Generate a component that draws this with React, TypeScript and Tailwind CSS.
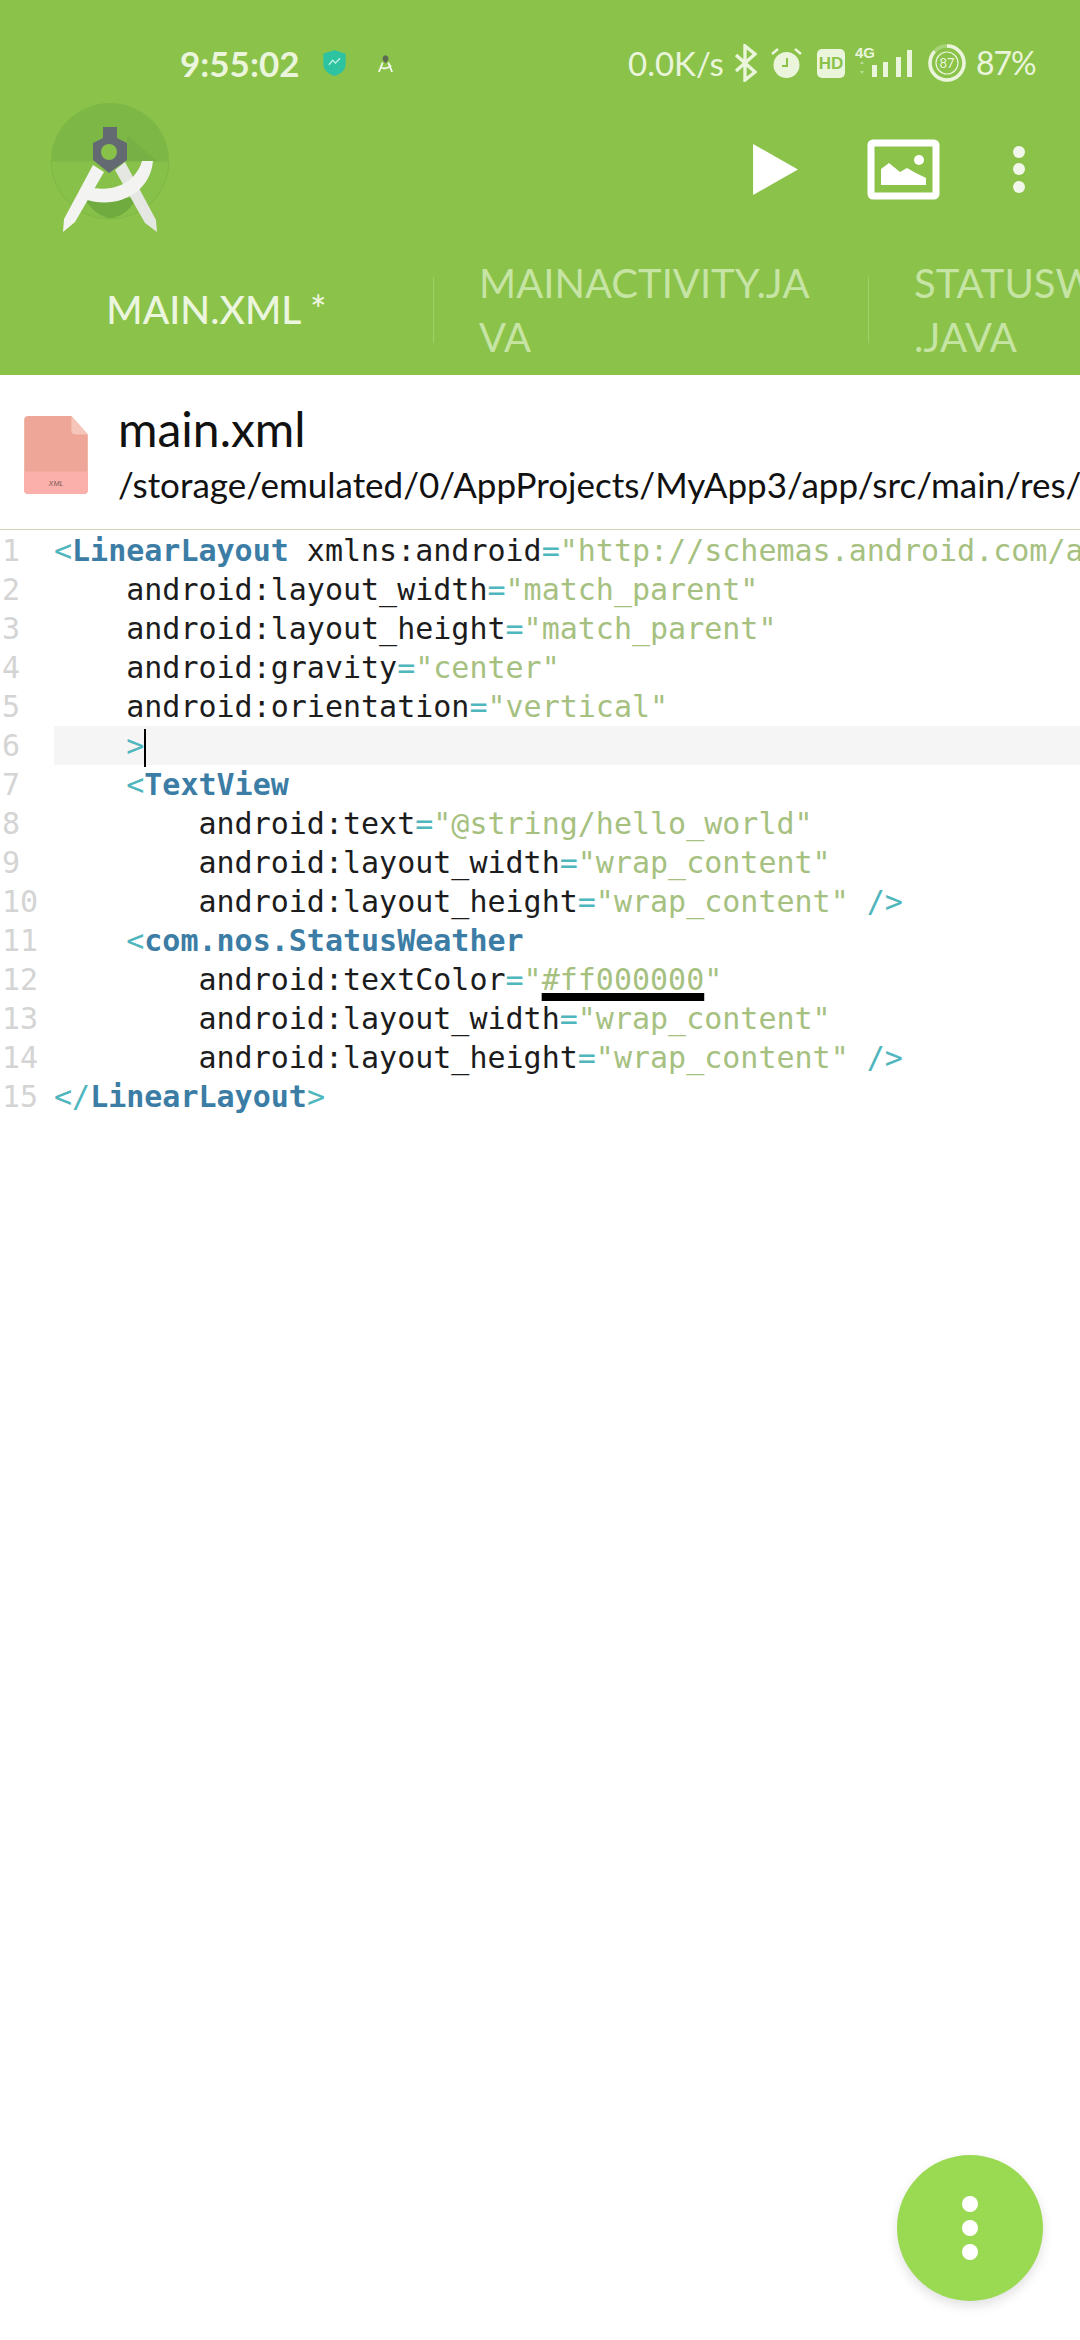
import React from "react";

const P = ({ children }: { children: React.ReactNode }) => <span className="text-[#4fb6bd]">{children}</span>;
const T = ({ children }: { children: React.ReactNode }) => <span className="font-bold text-[#3c7da6]">{children}</span>;
const S = ({ children }: { children: React.ReactNode }) => <span className="text-[#a6c17f]">{children}</span>;

const Attr = ({ indent, name, value, end }: { indent: string; name: string; value: React.ReactNode; end?: string }) => (
  <>
    {indent}
    {name}
    <P>=</P>
    <S>{value}</S>
    {end ? <P>{end}</P> : null}
  </>
);

const I4 = "    ";
const I8 = "        ";

const lines: React.ReactNode[] = [
  <>
    <P>&lt;</P>
    <T>LinearLayout</T> xmlns:android<P>=</P>
    <S>"http://schemas.android.com/a</S>
  </>,
  <Attr indent={I4} name="android:layout_width" value={'"match_parent"'} />,
  <Attr indent={I4} name="android:layout_height" value={'"match_parent"'} />,
  <Attr indent={I4} name="android:gravity" value={'"center"'} />,
  <Attr indent={I4} name="android:orientation" value={'"vertical"'} />,
  <>
    {I4}
    <P>&gt;</P>
    <span className="inline-block w-0 h-[38px] border-l-2 border-black align-middle" />
  </>,
  <>
    {I4}
    <P>&lt;</P>
    <T>TextView</T>
  </>,
  <Attr indent={I8} name="android:text" value={'"@string/hello_world"'} />,
  <Attr indent={I8} name="android:layout_width" value={'"wrap_content"'} />,
  <Attr indent={I8} name="android:layout_height" value={'"wrap_content"'} end=" />" />,
  <>
    {I4}
    <P>&lt;</P>
    <T>com.nos.StatusWeather</T>
  </>,
  <Attr
    indent={I8}
    name="android:textColor"
    value={
      <>
        "<span className="underline decoration-black decoration-[8px] underline-offset-[3px]">#ff000000</span>"
      </>
    }
  />,
  <Attr indent={I8} name="android:layout_width" value={'"wrap_content"'} />,
  <Attr indent={I8} name="android:layout_height" value={'"wrap_content"'} end=" />" />,
  <>
    <P>&lt;/</P>
    <T>LinearLayout</T>
    <P>&gt;</P>
  </>,
];

const Logo = () => (
  <svg className="ml-[45px] shrink-0" width="130" height="150" viewBox="45 93 130 150" fill="none">
    <path d="M51 161a59 58 0 0 1 118 0z" fill="#7db847" />
    <path d="M51 161a59 58 0 0 0 118 0z" fill="#88c14a" stroke="#7db847" strokeWidth="1" />
    <path d="M84 198c8 14 20 20 26 20s20-5 26-20z" fill="#6fab3f" />
    <path d="M127 135l30 26h-30z" fill="#77b044" />
    <path d="M93 165l11 7-29 50-12 10 1-13z" fill="#f3f4f1" />
    <path d="M115 170l10-8 31 58 1 12-12-9z" fill="#e5e8e2" />
    <path d="M88 187c20 5 46 0 54-26h11c-3 34-40 50-71 37z" fill="#f3f4f1" />
    <path d="M103 127h14v11l10 5v17l-18 13-16-13v-17l10-5z" fill="#646a72" />
    <circle cx="109" cy="152" r="8" fill="#88c14a" />
  </svg>
);

const ImageIcon = () => (
  <svg width="73" height="61" viewBox="0 0 73 61" fill="none">
    <rect x="4" y="4" width="65" height="53" rx="2" stroke="#fff" strokeWidth="7" />
    <path d="M14 46V30l8-6 11 9 7-4 7 4 12 6v7z" fill="#fff" />
    <circle cx="52" cy="21" r="5" fill="#fff" />
  </svg>
);

const StatusIcons = () => (
  <div className="flex items-center text-[#eaf5dc] h-[36px]">
    <span className="w-[98px] text-[33px] leading-none whitespace-nowrap">0.0K/s</span>
    <svg className="ml-[8px]" width="23" height="38" viewBox="0 0 23 38" fill="none" stroke="#eaf5dc" strokeWidth="3.4">
      <path d="M2 11l19 17-10 8V2l10 8L2 27" />
    </svg>
    <svg className="ml-[14px]" width="31" height="32" viewBox="0 0 31 32">
      <circle cx="15.5" cy="18" r="13" fill="#eaf5dc" />
      <path d="M1 7l6-5M30 7l-6-5" stroke="#eaf5dc" strokeWidth="2.5" fill="none" />
      <path d="M16 11v8h-5" stroke="#8bc24a" strokeWidth="2" fill="none" />
    </svg>
    <span className="ml-[15px] w-[28px] h-[29px] rounded-[5px] bg-[#eaf5dc] flex items-center justify-center text-[17px] leading-none font-bold text-[#8bc24a] font-['Liberation_Sans',sans-serif]">
      HD
    </span>
    <svg className="ml-[10px]" width="58" height="36" viewBox="0 0 58 36">
      <text x="0" y="13" fontSize="15" fontWeight="700" fill="#eaf5dc" fontFamily="Liberation Sans, sans-serif">
        4G
      </text>
      <path d="M5 19l2-3 2 3zM5 26l2 3 2-3z" fill="#b9dc94" />
      <rect x="17" y="20" width="5" height="12" fill="#eaf5dc" />
      <rect x="28" y="17" width="5" height="15" fill="#eaf5dc" />
      <rect x="41" y="12" width="5" height="20" fill="#eaf5dc" />
      <rect x="52" y="5" width="5" height="27" fill="#eaf5dc" />
    </svg>
    <svg className="ml-[15px]" width="38" height="38" viewBox="0 0 38 38" fill="none">
      <circle cx="19" cy="19" r="17" stroke="#a9d479" strokeWidth="3.5" />
      <circle cx="19" cy="19" r="17" stroke="#eaf5dc" strokeWidth="3.5" strokeDasharray="87 100" pathLength="100" transform="rotate(-90 19 19)" />
      <circle cx="19" cy="19" r="11" stroke="#eaf5dc" strokeWidth="1.2" />
      <text x="19" y="23.5" textAnchor="middle" fontSize="13" fill="#eaf5dc" fontFamily="Lato, sans-serif">
        87
      </text>
    </svg>
    <span className="ml-[10px] w-[57px] text-[32px] tracking-[-1px] leading-none whitespace-nowrap">87%</span>
  </div>
);

export default function App() {
  return (
    <div className="relative w-[1080px] h-[2340px] overflow-hidden bg-white font-['Lato',sans-serif]">
      <header className="h-[375px] bg-[#8bc24a] flex flex-col">
        <div className="h-[93px] pt-[45px] pl-[180px] pr-[47px] flex items-start justify-between">
          <div className="flex items-center text-[#eaf5dc] h-[36px]">
            <span className="text-[35px] leading-none font-bold">9:55:02</span>
            <svg className="ml-[22px]" width="25" height="28" viewBox="0 0 26 30">
              <path d="M13 1l12 4v11c0 7-6 11-12 13C7 27 1 23 1 16V5z" fill="#2ec3a0" />
              <path d="M7 17l4-5 3 3 5-5" stroke="#b9f0e0" strokeWidth="1.5" fill="none" />
            </svg>
            <svg className="ml-[30px]" width="17" height="19" viewBox="0 0 18 20">
              <path d="M9 1l3 2v3l-3 4-3-4V3z" fill="#5d6b52" />
              <path d="M6 9L2 19M12 9l4 10M3 14c4 2 9 1 12-2" stroke="#f1f6ea" strokeWidth="2" fill="none" />
            </svg>
          </div>
          <StatusIcons />
        </div>
        <div className="h-[147px] flex items-start justify-between pr-[55px]">
          <Logo />
          <div className="flex items-center h-[152px]">
            <svg width="45" height="53" viewBox="0 0 44 52">
              <path d="M0 1l44 25L0 51z" fill="#fff" />
            </svg>
            <div className="ml-[69px]">
              <ImageIcon />
            </div>
            <div className="ml-[73px] flex flex-col gap-[5.5px]">
              <span className="w-[12px] h-[12px] rounded-full bg-[#f1f7ea]" />
              <span className="w-[12px] h-[12px] rounded-full bg-[#f1f7ea]" />
              <span className="w-[12px] h-[12px] rounded-full bg-[#f1f7ea]" />
            </div>
          </div>
        </div>
        <div className="h-[135px] flex overflow-hidden leading-[54px] whitespace-nowrap">
          <div className="w-[433px] shrink-0 pt-[42px] text-center text-[39px] font-medium text-[#ecf6df]">MAIN.XML *</div>
          <div className="w-px h-[66px] mt-[37px] bg-[#a0cf6c] shrink-0" />
          <div className="w-[434px] shrink-0 pl-[45px] pt-[16px] text-[40px] text-[#c6e4a4]">
            <div>MAINACTIVITY.JA</div>
            <div>VA</div>
          </div>
          <div className="w-px h-[66px] mt-[37px] bg-[#a0cf6c] shrink-0" />
          <div className="pl-[45px] pt-[16px] text-[40px] text-[#c6e4a4]">
            <div>STATUSW</div>
            <div>.JAVA</div>
          </div>
        </div>
      </header>

      <section className="h-[155px] flex border-b border-[#d4d2bb] whitespace-nowrap overflow-hidden">
        <svg className="ml-[24px] mt-[41px] shrink-0" width="64" height="78" viewBox="0 0 62 76">
          <path d="M4 0h42l16 18v54a4 4 0 0 1-4 4H4a4 4 0 0 1-4-4V4a4 4 0 0 1 4-4z" fill="#eda697" />
          <path d="M0 54h62v18a4 4 0 0 1-4 4H4a4 4 0 0 1-4-4z" fill="#fbb0ab" />
          <path d="M46 0l16 18H50a4 4 0 0 1-4-4z" fill="#f6c6bb" />
          <text x="31" y="68" textAnchor="middle" fontSize="7" fontStyle="italic" fill="#7a5a55" fontFamily="Liberation Sans, sans-serif">
            XML
          </text>
        </svg>
        <div className="ml-[30px] pt-[26px] text-[#111]">
          <div className="text-[48px] leading-[56px]">main.xml</div>
          <div className="text-[35px] leading-[44px] mt-[5px]">/storage/emulated/0/AppProjects/MyApp3/app/src/main/res/</div>
        </div>
      </section>

      <main className="flex pt-[1px] font-['DejaVu_Sans_Mono',monospace] text-[30px] leading-[39px] text-[#1c1c1c]">
        <div className="w-[54px] shrink-0 pl-[2px] text-[#d4d4d4]">
          {lines.map((_, i) => (
            <div key={i} className="h-[39px]">
              {i + 1}
            </div>
          ))}
        </div>
        <div className="flex-1 min-w-0 overflow-hidden">
          {lines.map((l, i) => (
            <div key={i} className={`h-[39px] whitespace-pre ${i === 5 ? "bg-[#f5f5f5]" : ""}`}>
              {l}
            </div>
          ))}
        </div>
      </main>

      <button className="absolute left-[897px] top-[2155px] w-[146px] h-[146px] rounded-full bg-[#9ad952] shadow-[0_5px_12px_rgba(0,0,0,0.12)] flex flex-col items-center justify-center gap-[8px]">
        <span className="w-[16px] h-[16px] rounded-full bg-white" />
        <span className="w-[16px] h-[16px] rounded-full bg-white" />
        <span className="w-[16px] h-[16px] rounded-full bg-white" />
      </button>
    </div>
  );
}
